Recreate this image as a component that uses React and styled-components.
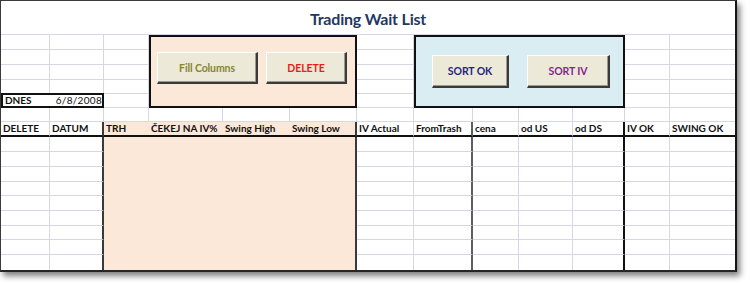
import React from 'react';
import styled, { createGlobalStyle, css } from 'styled-components';

const GlobalStyle = createGlobalStyle`
	html, body {
		margin: 0;
		padding: 0;
		background: #ffffff;
	}
	body {
		font-family: Lato, 'Liberation Sans', sans-serif;
	}
`;

const colors = {
	grid: '#d6d6e6',
	dark: '#3a3a3a',
	gray: '#5e5e5e',
	black: '#111111',
	tint: '#fce8d9',
	sky: '#daedf3',
	face: '#ece9d8',
	navy: '#1f3864'
};

const COLUMNS = [
	{ w: 49, label: 'DELETE' },
	{ w: 54, label: 'DATUM', edge: 'dark' },
	{ w: 45, label: 'TRH', tint: true },
	{ w: 74, label: 'ČEKEJ NA IV%', tint: true },
	{ w: 67, label: 'Swing High', tint: true },
	{ w: 67, label: 'Swing Low', tint: true, edge: 'dark' },
	{ w: 57, label: 'IV Actual' },
	{ w: 59, label: 'FromTrash', edge: 'gray' },
	{ w: 46, label: 'cena' },
	{ w: 54, label: 'od US' },
	{ w: 52, label: 'od DS', edge: 'black' },
	{ w: 45, label: 'IV OK' },
	{ w: 65, label: 'SWING OK', edge: 'none' }
];

// rows under the title: 6 upper rows, the header row, 9 body rows
const ROWS = [15, 15, 15, 14, 14, 14, 15, 15, 15, 15, 14, 15, 15, 14, 15, 15];
const HEADER_ROW = 6;

const edgeStyle = {
	grid: `1px solid ${colors.grid}`,
	dark: `2px solid ${colors.dark}`,
	gray: `2px solid ${colors.gray}`,
	black: `2px solid ${colors.black}`,
	thick: `2px solid ${colors.black}`,
	none: 'none'
};

const App = () => (
	<Page>
		<GlobalStyle />
		<Sheet>
			<Title>Trading Wait List</Title>
			{ROWS.map((h, r) =>
				COLUMNS.map((col, c) => {
					const lower = r >= HEADER_ROW;
					const last = c === COLUMNS.length - 1;
					let right = last ? 'none' : 'grid';
					let bottom = r === ROWS.length - 1 ? 'none' : 'grid';
					const tint = lower && col.tint;
					if (lower) {
						if (col.edge) right = col.edge;
						else if (tint) right = 'none';
						if (tint) bottom = 'none';
					}
					if (r === HEADER_ROW) bottom = 'thick';
					return (
						<Cell
							key={`${r}-${c}`}
							$row={r + 2}
							$col={c + 1}
							$right={right}
							$bottom={bottom}
							$tint={tint}
							$header={r === HEADER_ROW}
						>
							{r === HEADER_ROW ? col.label : null}
						</Cell>
					);
				})
			)}
			<DateBox>
				<strong>DNES</strong>
				<span>6/8/2008</span>
			</DateBox>
			<ButtonPanel $bg={colors.tint} $cols="4 / 7" $pad="15px 0 0 6px" $gap={8}>
				<MacroButton $w={101} $h={32} $color="#86862a">Fill Columns</MacroButton>
				<MacroButton $w={81} $h={32} $color="#f01818">DELETE</MacroButton>
			</ButtonPanel>
			<ButtonPanel $bg={colors.sky} $cols="8 / 12" $pad="18px 0 0 16px" $gap={18}>
				<MacroButton $w={77} $h={33} $color="#25257f">SORT OK</MacroButton>
				<MacroButton $w={83} $h={33} $color="#86268a">SORT IV</MacroButton>
			</ButtonPanel>
		</Sheet>
	</Page>
);

const Page = styled.div`
	width: 750px;
	height: 284px;
	background: #ffffff;
	overflow: hidden;
`;

const Sheet = styled.div`
	display: grid;
	grid-template-columns: ${COLUMNS.map(c => `${c.w}px`).join(' ')};
	grid-template-rows: 34px ${ROWS.map(h => `${h}px`).join(' ')};
	width: max-content;
	background: #ffffff;
	border-top: 1px solid #3a3a3a;
	border-left: 1px solid #3a3a3a;
	border-right: 2px solid #151515;
	border-bottom: 2px solid #262626;
	box-shadow: 3px 4px 6px rgba(0, 0, 0, 0.5);
	font-family: Lato, 'Liberation Sans', sans-serif;
	color: #111;
`;

const Title = styled.div`
	grid-column: 1 / -1;
	grid-row: 1;
	display: flex;
	align-items: center;
	justify-content: center;
	padding-top: 1px;
	box-sizing: border-box;
	border-bottom: 1px solid ${colors.grid};
	font-size: 16px;
	font-weight: 700;
	color: ${colors.navy};
	letter-spacing: -0.2px;
`;

const Cell = styled.div`
	grid-row: ${p => p.$row};
	grid-column: ${p => p.$col};
	box-sizing: border-box;
	min-width: 0;
	border-right: ${p => edgeStyle[p.$right]};
	border-bottom: ${p => edgeStyle[p.$bottom]};
	background: ${p => (p.$tint ? colors.tint : 'transparent')};
	${p =>
		p.$header &&
		css`
			display: flex;
			align-items: flex-end;
			padding: 0 0 1px 2px;
			font-size: 10px;
			font-weight: 700;
			white-space: nowrap;
			overflow: visible;
		`}
`;

const DateBox = styled.div`
	grid-column: 1 / 3;
	grid-row: 6;
	margin-top: -1px;
	display: flex;
	align-items: flex-end;
	justify-content: space-between;
	box-sizing: border-box;
	border: 2px solid ${colors.black};
	padding: 0 0 0 2px;
	background: #ffffff;
	font-size: 10px;
	line-height: 12px;

	strong {
		font-weight: 700;
	}

	span {
		letter-spacing: 0.3px;
	}
`;

const ButtonPanel = styled.div`
	grid-column: ${p => p.$cols};
	grid-row: 2 / 7;
	display: flex;
	align-items: flex-start;
	gap: ${p => p.$gap}px;
	box-sizing: border-box;
	padding: ${p => p.$pad};
	background: ${p => p.$bg};
	border: 2px solid ${colors.black};
`;

const MacroButton = styled.button`
	width: ${p => p.$w}px;
	height: ${p => p.$h}px;
	flex: none;
	box-sizing: border-box;
	padding: 0;
	background: ${colors.face};
	border: 1px solid;
	border-color: #ffffff #3a3a3a #3a3a3a #ffffff;
	border-width: 1px 2px 2px 1px;
	box-shadow: inset -1px -1px 0 #9a9a90;
	font-family: Lato, 'Liberation Sans', sans-serif;
	font-size: 10.5px;
	font-weight: 700;
	color: ${p => p.$color};
	letter-spacing: -0.1px;
`;

export default App;
